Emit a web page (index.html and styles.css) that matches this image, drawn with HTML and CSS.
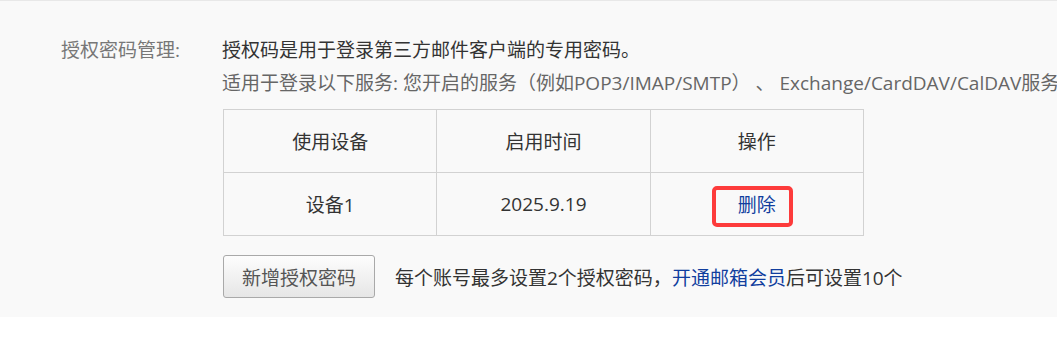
FILE: index.html
```html
<!DOCTYPE html>
<html lang="zh-CN">
<head>
<meta charset="utf-8">
<title>授权密码管理</title>
<link rel="stylesheet" href="styles.css">
</head>
<body>
<div class="panel">
  <div class="row">
    <div class="label">授权密码管理:</div>
    <div class="content">
      <div class="line main">授权码是用于登录第三方邮件客户端的专用密码。</div>
      <div class="line sub">适用于登录以下服务: 您开启的服务（例如POP3/IMAP/SMTP） 、 Exchange/CardDAV/CalDAV服务</div>
      <table class="devices">
        <thead>
          <tr><th>使用设备</th><th>启用时间</th><th>操作</th></tr>
        </thead>
        <tbody>
          <tr>
            <td>设备1</td>
            <td class="num">2025.9.19</td>
            <td class="op"><a class="link" href="#">删除</a><span class="mark"></span></td>
          </tr>
        </tbody>
      </table>
      <div class="actions">
        <button class="btn" type="button">新增授权密码</button>
        <span class="tip">每个账号最多设置2个授权密码，<a class="link" href="#">开通邮箱会员</a>后可设置10个</span>
      </div>
    </div>
  </div>
</div>
</body>
</html>
```
FILE: styles.css
```css
html, body {
  margin: 0;
  padding: 0;
  background: #ffffff;
  overflow: hidden;
}
body {
  font-family: "Open Sans", "Noto Sans CJK SC", sans-serif;
  font-size: 19px;
  color: #333;
}
.panel {
  background: #f9f9f9;
  border-top: 1px solid #e8e8e8;
  padding: 33px 0 19px 0;
}
.row {
  display: grid;
  grid-template-columns: 161px 1fr;
  padding-left: 61px;
}
.label {
  color: #777;
  line-height: 33px;
  white-space: nowrap;
}
.content {
  min-width: 0;
}
.line {
  line-height: 33px;
  white-space: nowrap;
}
.main { color: #333; }
.sub { color: #666; }
.devices {
  margin-top: 9px;
  margin-left: 1px;
  border-collapse: collapse;
  width: 641px;
  table-layout: fixed;
}
.devices th, .devices td {
  border: 1px solid #d2d2d2;
  height: 62px;
  padding: 0;
  text-align: center;
  font-weight: normal;
  color: #333;
}
.devices .op {
  position: relative;
}
.mark {
  position: absolute;
  left: 61px;
  top: 13px;
  width: 81px;
  height: 41px;
  box-sizing: border-box;
  border: 4px solid #fd3b3b;
  border-radius: 5px;
}
.link {
  color: #113e9e;
  text-decoration: none;
}
.actions {
  margin-top: 19px;
  display: flex;
  align-items: center;
  gap: 20px;
  margin-left: 1px;
}
.btn {
  width: 152px;
  height: 43px;
  box-sizing: border-box;
  border: 1px solid #a9a9a9;
  border-radius: 3px;
  background: linear-gradient(#fdfdfd, #e6e6e6);
  font-family: inherit;
  font-size: 19px;
  color: #555;
  padding: 0;
}
.tip {
  color: #333;
  white-space: nowrap;
}
```
